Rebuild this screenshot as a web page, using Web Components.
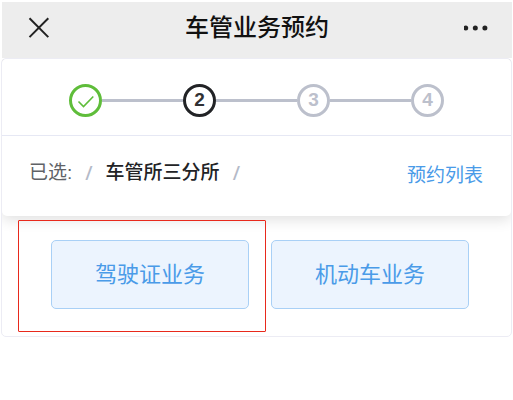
<!DOCTYPE html>
<html lang="zh-CN">
<head>
<meta charset="utf-8">
<meta name="viewport" content="width=device-width, initial-scale=1">
<title>车管业务预约</title>
<style>
    body {
        margin: 0;
        padding: 2px 1px 0 2px;
        background: #fff;
        color: #222326;
        font-family: "Liberation Sans", "Noto Sans CJK SC", sans-serif;
    }
</style>
</head>
<body>
<booking-page></booking-page>

<script>
class NavBar extends HTMLElement {
    constructor() {
        super();
        this.attachShadow({ mode: 'open' });
    }

    connectedCallback() {
        this.shadowRoot.innerHTML = `
            <style>
                :host {
                    display: grid;
                    grid-template-columns: 72px 1fr 72px;
                    align-items: center;
                    box-sizing: border-box;
                    height: 56px;
                    padding-bottom: 4px;
                    background: #ededed;
                    color: #111;
                }
                h1 {
                    margin: 0;
                    font-size: 24px;
                    line-height: 32px;
                    font-weight: 500;
                    text-align: center;
                    white-space: nowrap;
                }
                button {
                    display: flex;
                    align-items: center;
                    height: 52px;
                    padding: 0 24px;
                    border: 0;
                    background: none;
                    color: inherit;
                }
                svg {
                    display: block;
                    flex: none;
                }
            </style>
            <button type="button" aria-label="关闭">
                <svg width="24" height="24" viewBox="0 0 24 24" fill="none" stroke="#222" stroke-width="2">
                    <path d="M3.5 2.3 22.3 21.1M22.3 2.3 3.5 21.1"/>
                </svg>
            </button>
            <h1><slot></slot></h1>
            <button type="button" aria-label="更多">
                <svg width="26" height="24" viewBox="0 0 26 24" fill="#222">
                    <circle cx="1.7" cy="12" r="2.5"/>
                    <circle cx="11.3" cy="12" r="2.5"/>
                    <circle cx="20.9" cy="12" r="2.5"/>
                </svg>
            </button>
        `;
    }
}

class StepBar extends HTMLElement {
    constructor() {
        super();
        this.attachShadow({ mode: 'open' });
    }

    connectedCallback() {
        const total = Number(this.getAttribute('total'));
        const current = Number(this.getAttribute('current'));
        const check = `
            <svg width="18" height="18" viewBox="0 0 18 18" fill="none" stroke="#5fbd3a" stroke-width="1.6" role="img" aria-label="已完成">
                <path d="M1.5 10.5 6.5 15.5 16.3 5.5"/>
            </svg>`;
        const steps = [];
        for (let i = 1; i <= total; i++) {
            const state = i < current ? 'done' : i === current ? 'active' : 'wait';
            steps.push(`<li class="${state}"><span>${i < current ? check : i}</span></li>`);
        }

        this.shadowRoot.innerHTML = `
            <style>
                :host {
                    display: block;
                    padding: 25px 67px 18px;
                    border-bottom: 1px solid #e6e8f4;
                }
                ol {
                    display: flex;
                    margin: 0;
                    padding: 0;
                    list-style: none;
                }
                li {
                    display: flex;
                    align-items: center;
                    flex: 1;
                }
                li:last-child {
                    flex: none;
                }
                li:not(:last-child)::after {
                    content: '';
                    flex: 1;
                    height: 3px;
                    background: #bcc0cc;
                }
                span {
                    display: flex;
                    align-items: center;
                    justify-content: center;
                    box-sizing: border-box;
                    width: 33px;
                    height: 33px;
                    padding-bottom: 2px;
                    border: 3px solid #bcc0cc;
                    border-radius: 50%;
                    color: #bcc0cc;
                    font-size: 19px;
                    line-height: 24px;
                    font-weight: bold;
                }
                .done span {
                    border-color: #5fbd3a;
                }
                .active span {
                    border-color: #222326;
                    color: #303133;
                }
            </style>
            <ol>${steps.join('')}</ol>
        `;
    }
}

class SelectedPath extends HTMLElement {
    constructor() {
        super();
        this.attachShadow({ mode: 'open' });
    }

    connectedCallback() {
        this.shadowRoot.innerHTML = `
            <style>
                :host {
                    display: flex;
                    justify-content: space-between;
                    align-items: center;
                    height: 80px;
                    padding: 0 28px 0 27px;
                    font-size: 19px;
                    line-height: 28px;
                    white-space: nowrap;
                }
                .path {
                    display: flex;
                    gap: 13px;
                    padding-bottom: 6px;
                }
                .label {
                    color: #606266;
                }
                .slash {
                    color: #b4bac8;
                    font-family: "Noto Sans", sans-serif;
                    font-weight: 500;
                }
                strong {
                    font-weight: 500;
                }
                a {
                    color: #4a9be8;
                    text-decoration: none;
                }
            </style>
            <div class="path">
                <span class="label">已选:</span>
                <span class="slash">/</span>
                <strong><slot></slot></strong>
                <span class="slash">/</span>
            </div>
            <a href="#list">预约列表</a>
        `;
    }
}

class ServiceOption extends HTMLElement {
    constructor() {
        super();
        this.attachShadow({ mode: 'open' });
    }

    connectedCallback() {
        this.shadowRoot.innerHTML = `
            <style>
                :host {
                    display: block;
                    position: relative;
                }
                button {
                    display: block;
                    width: 100%;
                    height: 69px;
                    padding: 0;
                    border: 1px solid #a9d0f6;
                    border-radius: 5px;
                    background: #ecf4fe;
                    color: #4a9be8;
                    font: inherit;
                    font-size: 22px;
                    line-height: 32px;
                }
                /* red frame over the card around the marked option */
                :host([marked])::after {
                    content: '';
                    position: absolute;
                    inset: -20px -17px -23px -33px;
                    border: 1px solid #e8291c;
                    border-radius: 1px;
                    pointer-events: none;
                }
            </style>
            <button type="button"><slot></slot></button>
        `;
    }
}

class BookingPage extends HTMLElement {
    constructor() {
        super();
        this.attachShadow({ mode: 'open' });
    }

    connectedCallback() {
        this.shadowRoot.innerHTML = `
            <style>
                :host {
                    display: block;
                }
                main {
                    border: 1px solid #ececf4;
                    border-radius: 5px;
                    margin-left: -1px;
                }
                .summary {
                    border-radius: 5px;
                    background: #fff;
                    box-shadow: 0 4px 14px rgba(0, 0, 0, 0.12);
                    clip-path: inset(0 0 -30px 0);
                }
                .options {
                    display: grid;
                    grid-template-columns: 1fr 1fr;
                    gap: 22px;
                    padding: 24px 42px 27px 49px;
                }
            </style>
            <nav-bar>车管业务预约</nav-bar>
            <main>
                <div class="summary">
                    <step-bar total="4" current="2"></step-bar>
                    <selected-path>车管所三分所</selected-path>
                </div>
                <div class="options">
                    <service-option marked>驾驶证业务</service-option>
                    <service-option>机动车业务</service-option>
                </div>
            </main>
        `;
    }
}

customElements.define('nav-bar', NavBar);
customElements.define('step-bar', StepBar);
customElements.define('selected-path', SelectedPath);
customElements.define('service-option', ServiceOption);
customElements.define('booking-page', BookingPage);
</script>
</body>
</html>
